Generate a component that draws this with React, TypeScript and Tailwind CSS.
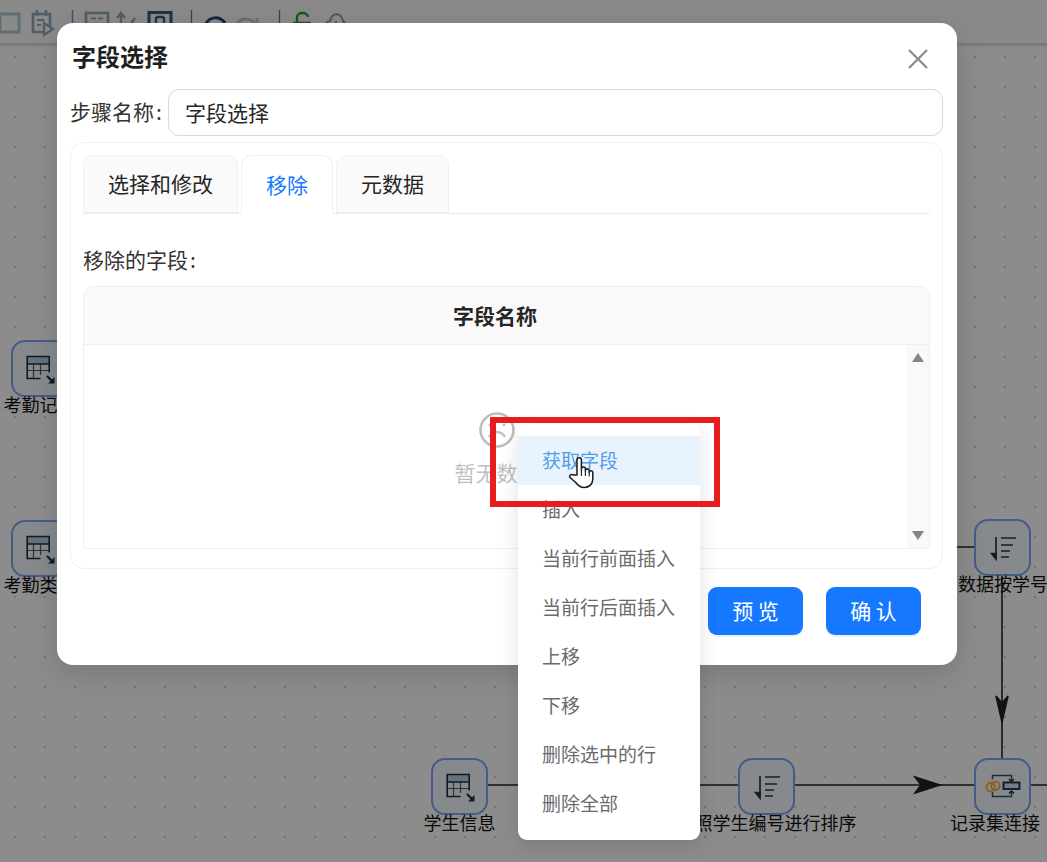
const menuItems = ['插入', '当前行前面插入', '当前行后面插入', '上移', '下移', '删除选中的行', '删除全部']

const TableIcon = () => (
  <svg width="31" height="30" viewBox="0 0 31 30" fill="none" stroke="#1c3346" strokeWidth="1.5">
    <path d="M3.2 2.5h22v7.5h-22z" fill="#b4cfe4" stroke="none" />
    <path d="M9.5 10v14M16.5 10v11M3.2 16.5h22" stroke="#55606a" strokeWidth="1.2" />
    <path d="M3.2 18.5V2.5h22v16M3.2 10h22M3.2 18.5v6h13.3" strokeWidth="1.6" />
    <path d="M23 22l6.5 6.5" strokeWidth="2.2" />
    <path d="M30.5 23v6.5h-6.5z" fill="#1c3346" stroke="none" />
  </svg>
)

const SortIcon = () => (
  <svg width="30" height="30" viewBox="0 0 30 30" fill="none" stroke="#26384a" strokeWidth="1.7">
    <path d="M8 4v20" />
    <path d="M3.5 20.5L8 26v-5.5z" fill="#26384a" />
    <path d="M13 5h15M13 12h12M13 18h9M13 24h8" />
  </svg>
)

const JoinIcon = () => (
  <svg width="36" height="30" viewBox="0 0 36 30" fill="none" strokeWidth="1.5">
    <path d="M7.5 7.5V3.5H26.5V9M7.5 20v4.5H26.5V19" stroke="#3b5263" />
    <path d="M24 7l2.5 2.5L29 7M24 21.5l2.5-2.5 2.5 2.5" stroke="#1c3346" />
    <rect x="18.5" y="10.5" width="16" height="6.5" fill="#cfe4f5" stroke="#132a3d" strokeWidth="1.8" />
    <ellipse cx="5.5" cy="15" rx="4" ry="4.5" transform="rotate(30 5.5 15)" stroke="#ffad2a" strokeWidth="1.9" />
    <ellipse cx="10.5" cy="14" rx="4" ry="4.5" transform="rotate(30 10.5 14)" stroke="#ffad2a" strokeWidth="1.9" />
  </svg>
)

const HandCursor = () => (
  <svg width="27" height="33" viewBox="0 0 27 33" fill="#fff" stroke="#1a1a1a" strokeWidth="1.5" strokeLinejoin="round" className="absolute left-[568px] top-[456px]">
    <path d="M9 19V4a2.2 2.2 0 0 1 4.4 0v10v-1a2 2 0 0 1 4 0v2v-.5a2 2 0 0 1 3.8 0v2v-.5a1.9 1.9 0 0 1 3.6 0V23c0 5-3.6 8.5-8.5 8.5c-4 0-6.5-2-8.5-5L2 21.5c-1.2-2 1-3.8 3-2.6z" />
    <path d="M13.4 14v6M17.4 15v5M21.2 16.5v4" fill="none" strokeWidth="1.1" />
  </svg>
)

const FlowNode = ({ x, y, label, labelX, children }: { x: string; y: string; label: string; labelX?: string; children: React.ReactNode }) => (
  <div className={`absolute ${x} ${y} w-[57px] h-[57px]`}>
    <div className="w-full h-full flex items-center justify-center rounded-[14px] border-2 border-[#7fa8f5] bg-[#f4fbff]">{children}</div>
    <div className={`absolute top-[51px] h-[27px] leading-[27px] text-[18px] text-[#111] whitespace-nowrap ${labelX ?? 'left-1/2 -translate-x-1/2'}`}>
      {label}
    </div>
  </div>
)

const Toolbar = () => (
  <div className="h-[45px] bg-[#fbfbfb] border-b-2 border-[#dcdcdc] shadow-[0_1px_3px_rgba(0,0,0,0.12)] relative">
    <svg width="360" height="46" viewBox="0 0 360 46" fill="none" stroke="#b0c6d6" strokeWidth="3" className="absolute left-0 top-0">
      <rect x="0" y="14" width="19" height="18" />
      <path d="M50 27V14H33v18h11M37 10v6M46 10v6" stroke="#93aabb" strokeWidth="2.6" />
      <path d="M37 20h7M37 25h4" stroke="#93aabb" strokeWidth="2" />
      <path d="M44 23l9 6-9 6z" stroke="#93aabb" strokeWidth="2.2" />
      <path d="M72.5 10v24" stroke="#4f9af0" strokeWidth="1.5" />
      <rect x="86" y="13" width="22" height="11" stroke="#93aabb" strokeWidth="2.6" />
      <path d="M91 18.5h5M98 18.5h5" stroke="#93aabb" strokeWidth="2.2" />
      <path d="M121 30V14M117 18l4-5 4 5M128 28l7-10" stroke="#93aabb" strokeWidth="2.4" />
      <rect x="149" y="12.5" width="22" height="18" stroke="#375e7d" strokeWidth="3" />
      <path d="M156 17v10M164 17v10M156 17h8" stroke="#375e7d" strokeWidth="2.4" />
      <path d="M191.5 10v24" stroke="#777" strokeWidth="1.4" />
      <path d="M206 24c3-7 13-9 19-1" stroke="#1d4d7c" strokeWidth="3" />
      <path d="M256 27c-2-9-14-11-19-3M257 18v8h-7" stroke="#c8c8c8" strokeWidth="3" />
      <path d="M279.5 10v24" stroke="#777" strokeWidth="1.4" />
      <path d="M297 24v-7a5.5 4 0 0 1 11 0M293 23h18" stroke="#2f9e2f" strokeWidth="2.4" />
      <path d="M325 30c-1-6 2-9 5-9 2-9 11-9 13 0 2 1 4 5 3 9M336 21v8" stroke="#7da2c3" strokeWidth="2" />
    </svg>
  </div>
)

const Canvas = () => (
  <div className="absolute inset-0 bg-white bg-[radial-gradient(circle,#d2d2d2_0.8px,transparent_1.2px)] bg-[size:30px_30px] bg-[position:0_12px]">
    <Toolbar />
    <svg width="1047" height="862" viewBox="0 0 1047 862" fill="none" stroke="#222" strokeWidth="1.6" className="absolute left-0 top-0">
      <path d="M957 547h17M1002 576v182M488 785h486M1031 785h16" />
      <path d="M915 777l25 8-25 8 6-8z" fill="#222" />
      <path d="M996 696l6 26 6-26-6 7z" fill="#222" />
    </svg>
    <FlowNode x="left-[11px]" y="top-[340px]" label="考勤记录"><TableIcon /></FlowNode>
    <FlowNode x="left-[11px]" y="top-[520px]" label="考勤类型"><TableIcon /></FlowNode>
    <FlowNode x="left-[974px]" y="top-[519px]" label="数据按学号" labelX="left-[-16px]"><SortIcon /></FlowNode>
    <FlowNode x="left-[431px]" y="top-[758px]" label="学生信息"><TableIcon /></FlowNode>
    <FlowNode x="left-[738px]" y="top-[758px]" label="按照学生编号进行排序"><SortIcon /></FlowNode>
    <FlowNode x="left-[974px]" y="top-[758px]" label="记录集连接" labelX="left-[-24px]"><JoinIcon /></FlowNode>
  </div>
)

const Dialog = () => (
  <div className="absolute left-[57px] top-[23px] w-[900px] h-[642px] bg-white rounded-[16px] shadow-[0_8px_28px_rgba(0,0,0,0.15)] pl-[13px] pr-[14px]">
    <div className="h-[66px] flex items-center justify-between pl-[2px] pr-[14px]">
      <div className="text-[24px] leading-[32px] font-bold text-[#1f1f1f]">字段选择</div>
      <svg width="22" height="22" viewBox="0 0 22 22" stroke="#8a8a8a" strokeWidth="2.2" className="mt-[5px]">
        <path d="M2 2l18 18M20 2L2 20" />
      </svg>
    </div>
    <div className="flex items-center h-[47px]">
      <div className="w-[98px] text-[21px] text-[#333] whitespace-nowrap -mt-[2px]">步骤名称<span className="ml-[2px]">:</span></div>
      <div className="flex-1 h-[47px] border border-[#d9d9d9] rounded-[11px] pl-[16px] flex items-center text-[21px] text-[#262626]">字段选择</div>
    </div>
    <div className="mt-[6px] h-[427px] border border-[#f0f0f0] rounded-[14px] px-[12px] pt-[12px]">
      <div className="flex gap-[3px] h-[59px] border-b border-[#ececec]">
        <div className="w-[155px] h-[58px] flex items-center justify-center rounded-t-[11px] border border-[#f0f0f0] bg-[#fafafa] text-[21px] text-[#262626]">选择和修改</div>
        <div className="w-[92px] h-[59px] flex items-center justify-center rounded-t-[11px] border border-[#f0f0f0] border-b-white bg-white text-[21px] text-[#1677ff]">移除</div>
        <div className="w-[113px] h-[58px] flex items-center justify-center rounded-t-[11px] border border-[#f0f0f0] bg-[#fafafa] text-[21px] text-[#262626]">元数据</div>
      </div>
      <div className="mt-[31px] h-[29px] leading-[29px] text-[21px] text-[#333]">移除的字段<span className="ml-[2px]">:</span></div>
      <div className="mt-[12px] h-[263px] border border-[#f0f0f0] rounded-t-[11px] overflow-hidden flex flex-col">
        <div className="h-[58px] flex items-center justify-center bg-[#fafafa] border-b border-[#f0f0f0] pr-[23px] text-[21px] font-bold text-[#262626]">字段名称</div>
        <div className="flex-1 flex">
          <div className="flex-1 flex flex-col items-center pt-[66px] pl-[2px]">
            <svg width="38" height="38" viewBox="0 0 38 38" fill="none" stroke="#bdbdbd" strokeWidth="2.6">
              <circle cx="19" cy="19" r="16.5" />
              <circle cx="12" cy="14" r="1.4" fill="#bdbdbd" stroke="none" />
              <circle cx="26" cy="14" r="1.4" fill="#bdbdbd" stroke="none" />
              <path d="M11 26c3-6 12-7 16 0" strokeWidth="2.2" />
            </svg>
            <div className="text-[21px] leading-[28px] text-[#bfbfbf] mt-[9px]">暂无数据</div>
          </div>
          <div className="w-[22px] bg-[#f9f9f9] flex flex-col items-center justify-between py-[8px]">
            <div className="w-0 h-0 border-x-[6px] border-x-transparent border-b-[9px] border-b-[#858585]" />
            <div className="w-0 h-0 border-x-[6px] border-x-transparent border-t-[9px] border-t-[#858585]" />
          </div>
        </div>
      </div>
    </div>
    <div className="flex justify-end gap-[23px] pr-[22px] mt-[18px]">
      <div className="w-[95px] h-[48px] flex items-center justify-center rounded-[9px] bg-[#1677ff] text-white text-[21px] shadow-[0_2px_0_rgba(5,145,255,0.1)]">预 览</div>
      <div className="w-[95px] h-[48px] flex items-center justify-center rounded-[9px] bg-[#1677ff] text-white text-[21px] shadow-[0_2px_0_rgba(5,145,255,0.1)]">确 认</div>
    </div>
  </div>
)

const ContextMenu = () => (
  <div className="absolute left-[518px] top-[424px] w-[182px] h-[416px] bg-white rounded-[9px] shadow-[0_6px_20px_rgba(0,0,0,0.12)] pt-[12px]">
    <div className="h-[49px] pl-[24px] flex items-center bg-[#e9f3fe] text-[19px] text-[#4f9de8]">获取字段</div>
    {menuItems.map((item) => (
      <div key={item} className="h-[49px] pl-[24px] flex items-center text-[19px] text-[#6b6b6b] whitespace-nowrap">{item}</div>
    ))}
  </div>
)

export default function App() {
  return (
    <div className="relative w-[1047px] h-[862px] overflow-hidden font-['Noto_Sans_CJK_SC','Noto_Sans',sans-serif]">
      <Canvas />
      <div className="absolute inset-0 bg-black/45" />
      <Dialog />
      <ContextMenu />
      <div className="absolute left-[490px] top-[417px] w-[230px] h-[90px] border-[6px] border-[#e81c1c]" />
      <HandCursor />
    </div>
  )
}
